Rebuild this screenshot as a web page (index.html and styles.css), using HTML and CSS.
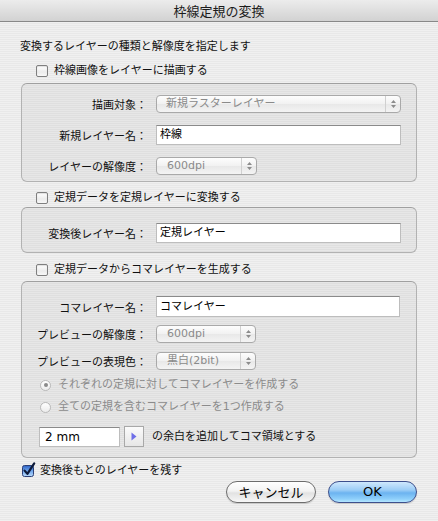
FILE: index.html
```html
<!DOCTYPE html>
<html lang="ja">
<head>
<meta charset="utf-8">
<title>枠線定規の変換</title>
<link rel="stylesheet" href="styles.css">
</head>
<body>
<div class="window">
  <header class="titlebar">枠線定規の変換</header>
  <main class="content">
    <p class="intro">変換するレイヤーの種類と解像度を指定します</p>

    <label class="check c1"><span class="box"></span>枠線画像をレイヤーに描画する</label>
    <section class="group g1">
      <div class="row r1">
        <span class="lbl">描画対象：</span>
        <div class="popup w246"><span class="ptext">新規ラスターレイヤー</span><span class="parrows"><svg width="7" height="10" viewBox="0 0 7 10"><path d="M1 4 L3.5 1 L6 4 Z M1 6 L3.5 9 L6 6 Z" fill="#8c8c8c"/></svg></span></div>
      </div>
      <div class="row r2">
        <span class="lbl">新規レイヤー名：</span>
        <div class="field w245">枠線</div>
      </div>
      <div class="row r2">
        <span class="lbl">レイヤーの解像度：</span>
        <div class="popup w101"><span class="ptext">600dpi</span><span class="parrows"><svg width="7" height="10" viewBox="0 0 7 10"><path d="M1 4 L3.5 1 L6 4 Z M1 6 L3.5 9 L6 6 Z" fill="#8c8c8c"/></svg></span></div>
      </div>
    </section>

    <label class="check c2"><span class="box"></span>定規データを定規レイヤーに変換する</label>
    <section class="group g2">
      <div class="row">
        <span class="lbl">変換後レイヤー名：</span>
        <div class="field w245">定規レイヤー</div>
      </div>
    </section>

    <label class="check c3"><span class="box"></span>定規データからコマレイヤーを生成する</label>
    <section class="group g3">
      <div class="row">
        <span class="lbl">コマレイヤー名：</span>
        <div class="field w244 h21">コマレイヤー</div>
      </div>
      <div class="row s8">
        <span class="lbl">プレビューの解像度：</span>
        <div class="popup w100"><span class="ptext">600dpi</span><span class="parrows"><svg width="7" height="10" viewBox="0 0 7 10"><path d="M1 4 L3.5 1 L6 4 Z M1 6 L3.5 9 L6 6 Z" fill="#8c8c8c"/></svg></span></div>
      </div>
      <div class="row s9">
        <span class="lbl">プレビューの表現色：</span>
        <div class="popup w100"><span class="ptext">黒白(2bit)</span><span class="parrows"><svg width="7" height="10" viewBox="0 0 7 10"><path d="M1 4 L3.5 1 L6 4 Z M1 6 L3.5 9 L6 6 Z" fill="#8c8c8c"/></svg></span></div>
      </div>
      <label class="radio s8"><span class="rbtn on"></span>それぞれの定規に対してコマレイヤーを作成する</label>
      <label class="radio s8"><span class="rbtn"></span>全ての定規を含むコマレイヤーを1つ作成する</label>
      <div class="margin-row">
        <div class="field w81 h20 latin">2 mm</div>
        <span class="stepper"><svg width="6" height="9" viewBox="0 0 6 9"><path d="M0.5 0.5 L5.5 4.5 L0.5 8.5 Z" fill="#6f6fe8"/></svg></span>
        <span class="mtext">の余白を追加してコマ領域とする</span>
      </div>
    </section>

    <label class="check c4"><span class="box checked"><svg width="15" height="16" viewBox="0 0 15 16"><defs><linearGradient id="cb" x1="0" y1="0" x2="0" y2="1"><stop offset="0" stop-color="#2f63c4"/><stop offset="0.5" stop-color="#6fa6ec"/><stop offset="1" stop-color="#b9dbfb"/></linearGradient></defs><rect x="0.5" y="3.5" width="11" height="11" rx="2" fill="url(#cb)" stroke="#2b3f76"/><path d="M2.6 8.6 L5.4 11.8 L12.2 1.4" fill="none" stroke="#0d1a3a" stroke-width="2.2" stroke-linecap="round" stroke-linejoin="round"/></svg></span>変換後もとのレイヤーを残す</label>

    <div class="buttons">
      <button class="btn cancel">キャンセル</button>
      <button class="btn ok">OK</button>
    </div>
  </main>
</div>
</body>
</html>
```

FILE: styles.css
```css
* { box-sizing: border-box; }

body {
  margin: 0;
  background: #ececec;
}

.window {
  width: 438px;
  height: 521px;
  overflow: hidden;
  background: repeating-linear-gradient(to bottom, #f0f0f0 0, #f0f0f0 1px, #e8e8e8 1px, #e8e8e8 2px);
  font-family: "DejaVu Sans", "Noto Sans CJK JP", sans-serif;
  font-size: 11px;
  line-height: 14px;
  color: #111;
}

.titlebar {
  height: 22px;
  border-bottom: 1px solid #888;
  background: linear-gradient(to bottom, #ececec, #d2d2d2);
  text-align: center;
  font-family: "Noto Sans CJK JP", sans-serif;
  font-size: 13px;
  line-height: 21px;
  color: #1b1b1b;
}

.content {
  padding: 0 21px;
  display: flex;
  flex-direction: column;
}

.intro {
  margin: 18px 0 0 -1px;
  height: 14px;
}

/* checkboxes */
.check {
  display: flex;
  align-items: center;
  gap: 6px;
  height: 14px;
  padding-left: 15px;
}
.c1 { margin-top: 10px; }
.c2 { margin-top: 9px; }
.c3 { margin-top: 10px; }
.c4 { margin-top: 6px; padding-left: 1px; }

.box {
  width: 12px;
  height: 12px;
  flex: none;
  border: 1px solid #7f7f7f;
  border-radius: 2px;
  background: linear-gradient(to bottom, #ffffff, #ececec 60%, #f8f8f8);
  box-shadow: inset 0 1px 1px rgba(0,0,0,0.12);
}
.box.checked {
  border: none;
  background: none;
  box-shadow: none;
  position: relative;
}
.box.checked svg {
  position: absolute;
  left: 0;
  top: -3px;
}

/* group boxes */
.group {
  border: 1px solid #b2b2b2;
  border-top-color: #a0a0a0;
  border-radius: 6px;
  background: rgba(0,0,0,0.035);
  display: flex;
  flex-direction: column;
}
.g1 { margin-top: 5px; padding: 11px 15px 6px 0; }
.g2 { margin-top: 2px; padding: 15px 15px 9px 0; }
.g3 { margin-top: 4px; padding: 14px 15px 10px 0; }

.row {
  display: flex;
  align-items: center;
  gap: 9px;
}
.r2 { margin-top: 12px; }
.s8 { margin-top: 8px; }
.s9 { margin-top: 9px; }

.lbl {
  width: 125px;
  flex: none;
  text-align: right;
  font-family: "Noto Sans CJK JP", sans-serif;
  white-space: nowrap;
}

/* text fields */
.field {
  height: 20px;
  background: #fff;
  border: 1px solid #bdbdbd;
  border-top-color: #8a8a8a;
  padding: 0 3px;
  line-height: 18px;
  color: #000;
}
.h21 { height: 21px; line-height: 19px; }
.h20 { height: 20px; }
.latin { font-size: 12px; padding-left: 5px; }
.w245 { width: 245px; }
.w244 { width: 244px; }
.w81 { width: 81px; }

/* popup buttons */
.popup {
  height: 18px;
  display: flex;
  align-items: stretch;
  border: 1px solid #a9a9a9;
  border-radius: 4px;
  background: linear-gradient(to bottom, #fdfdfd, #f1f1f1 50%, #e8e8e8 51%, #f4f4f4);
  color: #8a8a8a;
}
.w246 { width: 246px; }
.w101 { width: 101px; }
.w100 { width: 100px; }
.ptext {
  flex: 1;
  padding-left: 9px;
  line-height: 16px;
  white-space: nowrap;
}
.popup.w100 .ptext, .popup.w101 .ptext { padding-left: 10px; }
.parrows {
  width: 15px;
  flex: none;
  border-left: 1px solid #d0d0d0;
  display: flex;
  align-items: center;
  justify-content: center;
}

/* radios */
.radio {
  display: flex;
  align-items: center;
  gap: 7px;
  height: 14px;
  padding-left: 18px;
  color: #8b8b8b;
}
.rbtn {
  width: 11px;
  height: 11px;
  flex: none;
  border-radius: 50%;
  border: 1px solid #b9b9b9;
  background: linear-gradient(to bottom, #ffffff, #ececec);
  display: flex;
  align-items: center;
  justify-content: center;
}
.rbtn.on::after {
  content: "";
  width: 4px;
  height: 4px;
  border-radius: 50%;
  background: #8a8a8a;
}

/* margin row */
.margin-row {
  margin-top: 12px;
  padding-left: 17px;
  display: flex;
  align-items: center;
}
.stepper {
  width: 20px;
  height: 21px;
  margin-left: 4px;
  border: 1px solid #a8a8a8;
  background: linear-gradient(to bottom, #fbfbfb, #e6e6e6);
  display: flex;
  align-items: center;
  justify-content: center;
}
.mtext {
  margin-left: 8px;
  color: #111;
}

/* push buttons */
.buttons {
  margin-top: 3px;
  display: flex;
  justify-content: flex-end;
  gap: 12px;
}
.btn {
  height: 22px;
  border-radius: 11px;
  font-size: 13px;
  line-height: 20px;
  padding: 0;
  color: #000;
}
.cancel {
  width: 90px;
  border: 1px solid #6d6d6d;
  background: linear-gradient(to bottom, #ffffff 0%, #f3f3f3 45%, #e2e2e2 55%, #f7f7f7 100%);
  font-family: "Noto Sans CJK JP", sans-serif;
  box-shadow: 0 1px 1px rgba(0,0,0,0.15);
}
.ok {
  width: 89px;
  border: 1px solid #3d4f8c;
  background: linear-gradient(to bottom, #cfe8fd 0%, #9ccdf6 40%, #6cb3f0 55%, #8fd0fb 85%, #b4e6ff 100%);
  font-family: "DejaVu Sans", sans-serif;
  box-shadow: 0 1px 1px rgba(0,0,0,0.15);
}
```
